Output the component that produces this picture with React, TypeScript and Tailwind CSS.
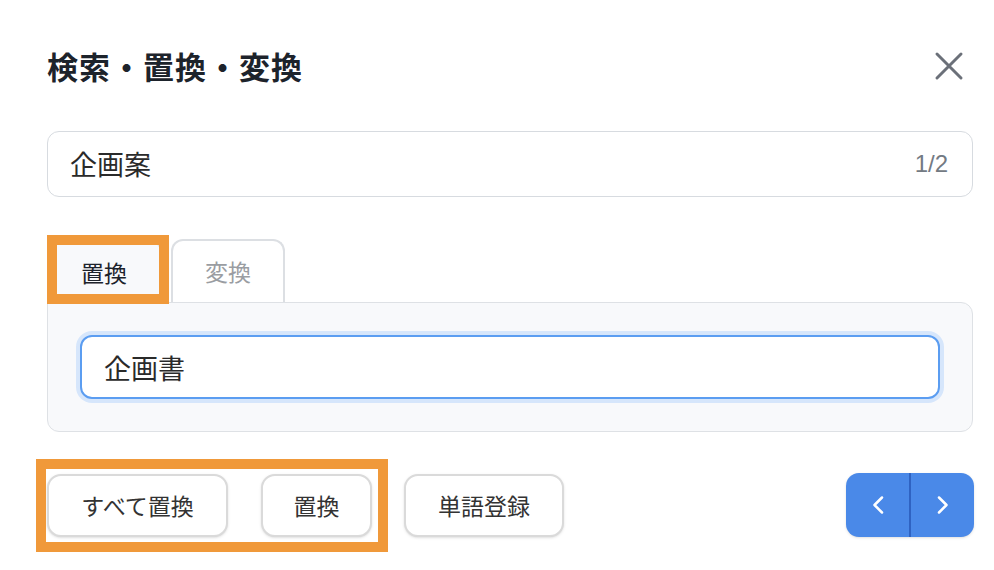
import React, { useState } from "react";

const jp = "font-['Noto_Sans_CJK_JP',sans-serif]";

const App: React.FC = () => {
  const [tab, setTab] = useState<"replace" | "convert">("replace");
  const [query, setQuery] = useState("企画案");
  const [replacement, setReplacement] = useState("企画書");

  return (
    <div className={`relative w-[994px] h-[570px] bg-white pl-[47px] pr-[21px] pt-[46px] ${jp}`}>
      {/* header */}
      <div className="flex items-center justify-between h-[40px]">
        <h2 className="text-[31px] leading-[40px] font-bold text-[#1d232b] tracking-[1px]">
          検索・置換・変換
        </h2>
        <button className="mr-[9px] text-[#6b7079]">
          <svg width="30" height="30" viewBox="0 0 30 30" fill="none">
            <path d="M3 3 L27 27 M27 3 L3 27" stroke="currentColor" strokeWidth="3" strokeLinecap="round" />
          </svg>
        </button>
      </div>

      {/* search box */}
      <div className="mt-[45px] h-[66px] flex items-center border-[1.5px] border-[#d7dbe0] rounded-[12px] pl-[22px] pr-[24px]">
        <input
          value={query}
          onChange={(e) => setQuery(e.target.value)}
          className="flex-1 bg-transparent outline-none text-[27px] text-[#2a2a2a]"
        />
        <span className="font-['Liberation_Sans',sans-serif] text-[24px] text-[#737a83]">1/2</span>
      </div>

      {/* tabs */}
      <div className="mt-[42px] flex items-end gap-[10px] h-[63px]">
        <button
          onClick={() => setTab("replace")}
          className={`w-[114px] h-[63px] -mb-px rounded-t-[12px] text-[23px] ${
            tab === "replace"
              ? "bg-[#f8f9fb] text-[#1d232b] border border-[#dee2e6] border-b-0"
              : "bg-white text-[#9a9da2] border border-[#dee2e6]"
          }`}
        >
          置換
        </button>
        <button
          onClick={() => setTab("convert")}
          className={`w-[114px] h-[63px] rounded-t-[12px] text-[23px] border-2 border-b-0 ${
            tab === "convert"
              ? "bg-[#f8f9fb] text-[#1d232b] border-[#dee2e6]"
              : "bg-white text-[#9a9da2] border-[#dcdfe3]"
          }`}
        >
          変換
        </button>
      </div>

      {/* tab panel */}
      <div className="bg-[#f8f9fb] border-[1.5px] border-[#dee1e5] rounded-b-[12px] rounded-tr-[12px] p-[32px]">
        <input
          value={replacement}
          onChange={(e) => setReplacement(e.target.value)}
          className="w-full h-[64px] bg-white border-2 border-[#5b9df1] ring-4 ring-[#d6e6fb] rounded-[12px] pl-[22px] outline-none text-[27px] text-[#2a2a2a]"
        />
      </div>

      {/* actions */}
      <div className="mt-[41px] flex items-center">
        <button className="w-[181px] h-[63px] border-2 border-[#dadada] rounded-[14px] bg-white text-[23px] text-[#333] shadow-sm">
          すべて置換
        </button>
        <button className="ml-[33px] w-[111px] h-[63px] border-2 border-[#dadada] rounded-[14px] bg-white text-[23px] text-[#333] shadow-sm">
          置換
        </button>
        <button className="ml-[32px] w-[160px] h-[63px] border-2 border-[#dadada] rounded-[14px] bg-white text-[23px] text-[#333] shadow-sm">
          単語登録
        </button>
        <div className="ml-auto -mr-px flex h-[64px] w-[128px] rounded-[13px] overflow-hidden bg-[#4a89e8] shadow-sm">
          <button className="flex-1 flex items-center justify-center text-white">
            <svg width="14" height="18" viewBox="0 0 14 18" fill="none">
              <path d="M11 1.5 L3.5 9 L11 16.5" stroke="currentColor" strokeWidth="2.5" strokeLinecap="round" strokeLinejoin="round" />
            </svg>
          </button>
          <div className="w-[2px] bg-[#2f63c2]" />
          <button className="flex-1 flex items-center justify-center text-white">
            <svg width="14" height="18" viewBox="0 0 14 18" fill="none">
              <path d="M3 1.5 L10.5 9 L3 16.5" stroke="currentColor" strokeWidth="2.5" strokeLinecap="round" strokeLinejoin="round" />
            </svg>
          </button>
        </div>
      </div>

      {/* highlight annotations */}
      <div className="absolute left-[47px] top-[235px] w-[122px] h-[69px] border-[10px] border-[#f0993a] pointer-events-none" />
      <div className="absolute left-[36px] top-[459px] w-[352px] h-[93px] border-[10px] border-[#f0993a] pointer-events-none" />
    </div>
  );
};

export default App;
